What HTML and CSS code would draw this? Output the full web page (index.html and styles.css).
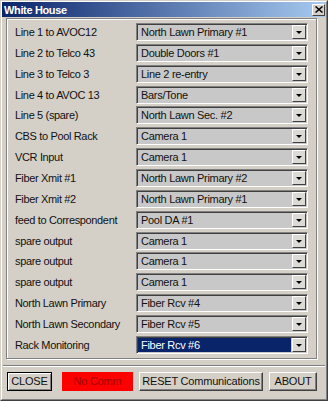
FILE: index.html
```html
<!DOCTYPE html>
<html>
<head>
<meta charset="utf-8">
<link rel="stylesheet" href="styles.css">
</head>
<body>
<div class="window">
  <div class="frame">
    <div class="titlebar">
      <span class="title">White House</span>
      <span class="xbtn"><svg width="8" height="7" viewBox="0 0 8 7"><path d="M0.5 0.5 L7.5 6.5 M7.5 0.5 L0.5 6.5" stroke="#000" stroke-width="1.5" fill="none"/></svg></span>
    </div>
    <div class="content">
      <div class="group">
        <div class="row"><span class="label">Line 1 to AVOC12</span><div class="combo"><span class="val">North Lawn Primary #1</span><span class="arrow"><i></i></span></div></div>
        <div class="row"><span class="label">Line 2 to Telco 43</span><div class="combo"><span class="val">Double Doors #1</span><span class="arrow"><i></i></span></div></div>
        <div class="row"><span class="label">Line 3 to Telco 3</span><div class="combo"><span class="val">Line 2 re-entry</span><span class="arrow"><i></i></span></div></div>
        <div class="row"><span class="label">Line 4 to AVOC 13</span><div class="combo"><span class="val">Bars/Tone</span><span class="arrow"><i></i></span></div></div>
        <div class="row"><span class="label">Line 5 (spare)</span><div class="combo"><span class="val">North Lawn Sec. #2</span><span class="arrow"><i></i></span></div></div>
        <div class="row"><span class="label">CBS to Pool Rack</span><div class="combo"><span class="val">Camera 1</span><span class="arrow"><i></i></span></div></div>
        <div class="row"><span class="label">VCR Input</span><div class="combo"><span class="val">Camera 1</span><span class="arrow"><i></i></span></div></div>
        <div class="row"><span class="label">Fiber Xmit #1</span><div class="combo"><span class="val">North Lawn Primary #2</span><span class="arrow"><i></i></span></div></div>
        <div class="row"><span class="label">Fiber Xmit #2</span><div class="combo"><span class="val">North Lawn Primary #1</span><span class="arrow"><i></i></span></div></div>
        <div class="row"><span class="label">feed to Correspondent</span><div class="combo"><span class="val">Pool DA #1</span><span class="arrow"><i></i></span></div></div>
        <div class="row"><span class="label">spare output</span><div class="combo"><span class="val">Camera 1</span><span class="arrow"><i></i></span></div></div>
        <div class="row"><span class="label">spare output</span><div class="combo"><span class="val">Camera 1</span><span class="arrow"><i></i></span></div></div>
        <div class="row"><span class="label">spare output</span><div class="combo"><span class="val">Camera 1</span><span class="arrow"><i></i></span></div></div>
        <div class="row"><span class="label">North Lawn Primary</span><div class="combo"><span class="val">Fiber Rcv #4</span><span class="arrow"><i></i></span></div></div>
        <div class="row"><span class="label">North Lawn Secondary</span><div class="combo"><span class="val">Fiber Rcv #5</span><span class="arrow"><i></i></span></div></div>
        <div class="row"><span class="label">Rack Monitoring</span><div class="combo selected"><span class="val">Fiber Rcv #6</span><span class="arrow"><i></i></span></div></div>
      </div>
      <div class="separator"></div>
      <div class="buttons">
        <div class="btn default close">CLOSE</div>
        <div class="status">No Comm</div>
        <div class="btn reset">RESET Communications</div>
        <div class="btn about">ABOUT</div>
      </div>
    </div>
  </div>
</div>
</body>
</html>
```
FILE: styles.css
```css
html, body {
  margin: 0;
  padding: 0;
  background: #d4d0c8;
}
body {
  width: 328px;
  height: 401px;
  overflow: hidden;
  font-family: "Liberation Sans", Arial, sans-serif;
  font-size: 11px;
  color: #111;
}
.window {
  box-sizing: border-box;
  width: 328px;
  height: 401px;
  border: 1px solid;
  border-color: #d4d0c8 #404040 #404040 #d4d0c8;
}
.frame {
  box-sizing: border-box;
  height: 100%;
  border: 1px solid;
  border-color: #ffffff #808080 #808080 #ffffff;
}
.titlebar {
  height: 15px;
  display: flex;
  align-items: center;
  justify-content: space-between;
  padding: 0 1px 0 2px;
  background: linear-gradient(to right, #0a246a, #a6caf0);
}
.title {
  color: #fff;
  font-weight: bold;
  font-size: 11px;
  letter-spacing: -0.35px;
}
.xbtn {
  box-sizing: border-box;
  width: 13px;
  height: 12px;
  background: #d4d0c8;
  border: 1px solid;
  border-color: #ffffff #404040 #404040 #ffffff;
  display: flex;
  align-items: center;
  justify-content: center;
}
.content {
  padding: 1px 9px 0 4px;
}
.group {
  border: 1px solid #808080;
  box-shadow: inset 1px 1px 0 #ffffff, 1px 1px 0 #ffffff;
  padding: 4px 8px 4px 8px;
  display: flex;
  flex-direction: column;
  gap: 2.87px;
}
.row {
  display: flex;
  align-items: center;
  height: 18px;
}
.label {
  width: 121px;
  letter-spacing: -0.35px;
  white-space: nowrap;
}
.combo {
  box-sizing: border-box;
  width: 172px;
  height: 18px;
  display: flex;
  border: 1px solid;
  border-color: #808080 #ffffff #ffffff #808080;
  background: #c8c8c8;
  box-shadow: inset 1px 1px 0 #404040;
  padding: 1px 1px 1px 1px;
}
.val {
  flex: 1;
  padding-left: 3px;
  line-height: 14px;
  letter-spacing: -0.3px;
  white-space: nowrap;
}
.combo.selected .val {
  background: #0a246a;
  color: #fff;
  margin-right: 1px;
}
.arrow {
  box-sizing: border-box;
  width: 14px;
  height: 14px;
  background: #dcdad4;
  border: 1px solid;
  border-color: #ffffff #404040 #404040 #ffffff;
  display: flex;
  align-items: center;
  justify-content: center;
}
.arrow i {
  width: 0;
  height: 0;
  border-left: 3px solid transparent;
  border-right: 3px solid transparent;
  border-top: 3px solid #000;
  margin-top: 1px;
}
.separator {
  height: 1px;
  background: #808080;
  border-bottom: 1px solid #ffffff;
  margin: 6px -8px 0 -3px;
}
.buttons {
  display: flex;
  align-items: center;
  margin-top: 5px;
  padding-left: 1px;
  height: 19px;
}
.btn {
  box-sizing: border-box;
  height: 19px;
  display: flex;
  align-items: center;
  justify-content: center;
  background: #d4d0c8;
  border: 1px solid;
  border-color: #ffffff #404040 #404040 #ffffff;
  box-shadow: inset -1px -1px 0 #808080;
  font-size: 11px;
  letter-spacing: -0.2px;
  white-space: nowrap;
}
.btn.default {
  border: 1px solid #000;
  box-shadow: inset 1px 1px 0 #ffffff, inset -1px -1px 0 #808080;
}
.close {
  width: 45px;
}
.status {
  box-sizing: border-box;
  width: 71px;
  height: 19px;
  margin-left: 10px;
  background: #ff0000;
  color: #a00000;
  display: flex;
  align-items: center;
  justify-content: center;
  letter-spacing: -0.2px;
}
.reset {
  width: 124px;
  margin-left: 6px;
}
.about {
  width: 48px;
  margin-left: 6px;
}
```
